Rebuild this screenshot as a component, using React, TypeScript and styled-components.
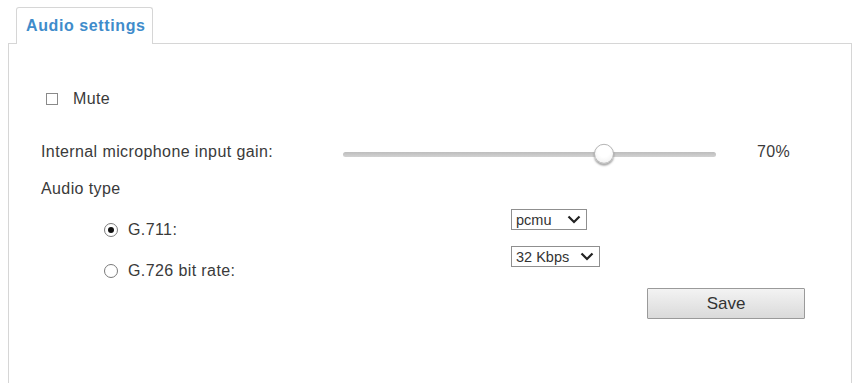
import React from "react";
import styled, { createGlobalStyle } from "styled-components";

const GlobalStyle = createGlobalStyle`
  html, body { margin: 0; padding: 0; background: #fff; }
  body { font-family: "Liberation Sans", Arial, sans-serif; color: #3a3a3a; }
`;

const Page = styled.div`
  padding: 7px 0 0 8px;
  width: 844px;
`;

const TabBar = styled.div`
  display: flex;
  padding-left: 8px;
`;

const Tab = styled.div`
  position: relative;
  z-index: 1;
  box-sizing: border-box;
  width: 137px;
  height: 37px;
  margin-bottom: -1px;
  padding-left: 9px;
  display: flex;
  align-items: center;
  background: #fff;
  border: 1px solid #d6d6d6;
  border-bottom: none;
  border-radius: 3px 3px 0 0;
  font-weight: bold;
  font-size: 16px;
  letter-spacing: 0.6px;
  color: #3f8ccb;
`;

const Panel = styled.div`
  box-sizing: border-box;
  width: 844px;
  height: 340px;
  border: 1px solid #d6d6d6;
  border-bottom: none;
  padding: 43px 0 0 32px;
  display: flex;
  flex-direction: column;
`;

const Row = styled.div<{ $top?: number }>`
  display: flex;
  align-items: center;
  height: 24px;
  margin-top: ${(p) => p.$top ?? 0}px;
`;

const Text = styled.span<{ $size?: number }>`
  font-size: ${(p) => p.$size ?? 16}px;
  letter-spacing: 0.4px;
  color: #3a3a3a;
  white-space: nowrap;
`;

const Checkbox = styled.span`
  box-sizing: border-box;
  width: 12px;
  height: 12px;
  border: 1px solid #8a8a8a;
  background: #fff;
  margin: 0 15px 0 5px;
`;

const GainLabel = styled(Text)`
  width: 302px;
`;

const Track = styled.div`
  position: relative;
  width: 373px;
  height: 5px;
  border-radius: 3px;
  background: linear-gradient(#bdbdbd, #d2d2d2);
  margin-top: 5px;
`;

const Thumb = styled.div`
  position: absolute;
  top: 50%;
  width: 20px;
  height: 20px;
  box-sizing: border-box;
  border-radius: 50%;
  transform: translate(-50%, -56%);
  background: radial-gradient(circle at 50% 35%, #ffffff 40%, #ececec 100%);
  border: 1px solid #b5b5b5;
  box-shadow: 0 2px 2px rgba(0, 0, 0, 0.35);
`;

const Value = styled(Text)`
  margin-left: 41px;
`;

const Options = styled.div`
  display: flex;
`;

const RadioColumn = styled.div`
  box-sizing: border-box;
  width: 470px;
  padding: 19px 0 0 63px;
  display: flex;
  flex-direction: column;
  gap: 21px;
`;

const RadioRow = styled.div`
  display: flex;
  align-items: center;
  height: 20px;
`;

const Radio = styled.span<{ $checked?: boolean }>`
  box-sizing: border-box;
  width: 14px;
  height: 14px;
  border-radius: 50%;
  border: 1px solid #7a7a7a;
  background: #fff;
  margin-right: 10px;
  display: flex;
  align-items: center;
  justify-content: center;
  &::after {
    content: "";
    display: ${(p) => (p.$checked ? "block" : "none")};
    width: 6px;
    height: 6px;
    border-radius: 50%;
    background: #111;
  }
`;

const SelectColumn = styled.div`
  padding-top: 8px;
  display: flex;
  flex-direction: column;
  align-items: flex-start;
  gap: 16px;
`;

const SelectBox = styled.div<{ $width: number }>`
  box-sizing: border-box;
  width: ${(p) => p.$width}px;
  height: 21px;
  border: 1px solid #8f8f8f;
  background: #fff;
  padding: 0 5px 0 4px;
  display: flex;
  align-items: center;
  justify-content: space-between;
  font-size: 14.5px;
  color: #333;
`;

const SaveButton = styled.button`
  box-sizing: border-box;
  margin: 5px 0 0 136px;
  width: 158px;
  height: 31px;
  border: 1px solid #9a9a9a;
  border-radius: 1px;
  background: linear-gradient(#f3f3f3, #dadada);
  font-family: "Liberation Sans", Arial, sans-serif;
  font-size: 17px;
  color: #333;
  padding: 0;
`;

const Chevron = () => (
  <svg width="14" height="9" viewBox="0 0 14 9">
    <polyline points="1.5,1.5 7,7 12.5,1.5" fill="none" stroke="#222" strokeWidth="2.2" />
  </svg>
);

const Select = ({ value, width }: { value: string; width: number }) => (
  <SelectBox $width={width}>
    <span>{value}</span>
    <Chevron />
  </SelectBox>
);

export default function App() {
  const gain = 70;
  return (
    <>
      <GlobalStyle />
      <Page>
        <TabBar>
          <Tab>Audio settings</Tab>
        </TabBar>
        <Panel>
          <Row>
            <Checkbox />
            <Text>Mute</Text>
          </Row>
          <Row $top={29}>
            <GainLabel>Internal microphone input gain:</GainLabel>
            <Track>
              <Thumb style={{ left: `${gain}%` }} />
            </Track>
            <Value>{gain}%</Value>
          </Row>
          <Row $top={13}>
            <Text>Audio type</Text>
          </Row>
          <Options>
            <RadioColumn>
              <RadioRow>
                <Radio $checked />
                <Text>G.711:</Text>
              </RadioRow>
              <RadioRow>
                <Radio />
                <Text>G.726 bit rate:</Text>
              </RadioRow>
            </RadioColumn>
            <SelectColumn>
              <Select value="pcmu" width={76} />
              <Select value="32 Kbps" width={89} />
              <SaveButton>Save</SaveButton>
            </SelectColumn>
          </Options>
        </Panel>
      </Page>
    </>
  );
}
